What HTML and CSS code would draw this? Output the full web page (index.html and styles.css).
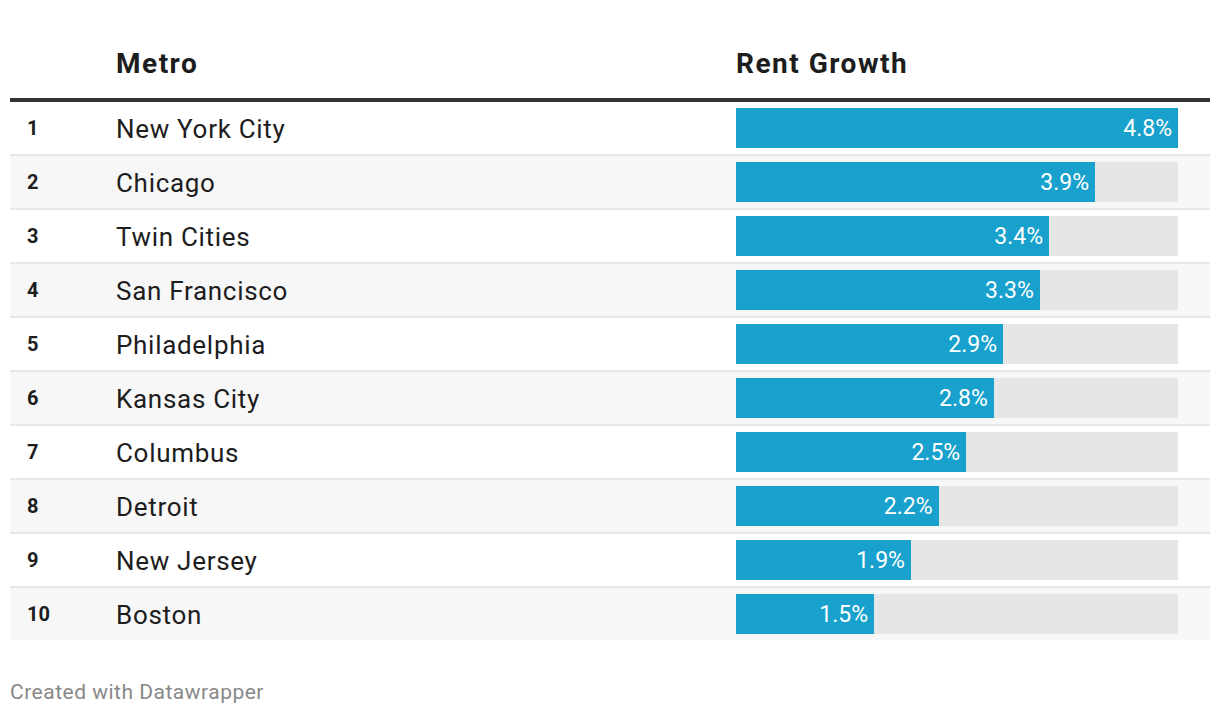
FILE: index.html
```html
<!DOCTYPE html>
<html lang="en">
<head>
<meta charset="utf-8">
<title>Rent Growth</title>
<link rel="stylesheet" href="styles.css">
</head>
<body>
<div class="chart">
  <div class="table">
    <div class="row head">
      <div class="cell rank"></div>
      <div class="cell metro">Metro</div>
      <div class="cell growth">Rent Growth</div>
    </div>
    <div class="row">
      <div class="cell rank">1</div>
      <div class="cell metro">New York City</div>
      <div class="cell growth"><div class="track"><div class="bar" style="width:100%"><span>4.8%</span></div></div></div>
    </div>
    <div class="row">
      <div class="cell rank">2</div>
      <div class="cell metro">Chicago</div>
      <div class="cell growth"><div class="track"><div class="bar" style="width:81.25%"><span>3.9%</span></div></div></div>
    </div>
    <div class="row">
      <div class="cell rank">3</div>
      <div class="cell metro">Twin Cities</div>
      <div class="cell growth"><div class="track"><div class="bar" style="width:70.83%"><span>3.4%</span></div></div></div>
    </div>
    <div class="row">
      <div class="cell rank">4</div>
      <div class="cell metro">San Francisco</div>
      <div class="cell growth"><div class="track"><div class="bar" style="width:68.75%"><span>3.3%</span></div></div></div>
    </div>
    <div class="row">
      <div class="cell rank">5</div>
      <div class="cell metro">Philadelphia</div>
      <div class="cell growth"><div class="track"><div class="bar" style="width:60.42%"><span>2.9%</span></div></div></div>
    </div>
    <div class="row">
      <div class="cell rank">6</div>
      <div class="cell metro">Kansas City</div>
      <div class="cell growth"><div class="track"><div class="bar" style="width:58.33%"><span>2.8%</span></div></div></div>
    </div>
    <div class="row">
      <div class="cell rank">7</div>
      <div class="cell metro">Columbus</div>
      <div class="cell growth"><div class="track"><div class="bar" style="width:52.08%"><span>2.5%</span></div></div></div>
    </div>
    <div class="row">
      <div class="cell rank">8</div>
      <div class="cell metro">Detroit</div>
      <div class="cell growth"><div class="track"><div class="bar" style="width:45.83%"><span>2.2%</span></div></div></div>
    </div>
    <div class="row">
      <div class="cell rank">9</div>
      <div class="cell metro">New Jersey</div>
      <div class="cell growth"><div class="track"><div class="bar" style="width:39.58%"><span>1.9%</span></div></div></div>
    </div>
    <div class="row last">
      <div class="cell rank">10</div>
      <div class="cell metro">Boston</div>
      <div class="cell growth"><div class="track"><div class="bar" style="width:31.25%"><span>1.5%</span></div></div></div>
    </div>
  </div>
  <div class="footer">Created with Datawrapper</div>
</div>
</body>
</html>
```

FILE: styles.css
```css
html, body {
  margin: 0;
  padding: 0;
  background: #ffffff;
}

body {
  font-family: Roboto, "Liberation Sans", sans-serif;
  color: #1d1d1d;
}

.chart {
  padding: 0 10px;
}

.table {
  display: flex;
  flex-direction: column;
}

.row {
  display: grid;
  grid-template-columns: 106px 620px 1fr;
  height: 52px;
  border-bottom: 2px solid #e8e8e8;
}

.row:nth-child(odd) {
  background: #f7f7f7;
}

.row.last {
  border-bottom: none;
}

.row.head {
  height: auto;
  background: #ffffff;
  border-bottom: 4px solid #333333;
  padding: 47px 0 17px;
}

.row.head .cell {
  display: block;
  padding: 0;
  font-size: 28px;
  font-weight: 700;
  line-height: 34px;
  letter-spacing: 1.5px;
  color: #1d1d1d;
}

.cell {
  display: flex;
  align-items: center;
}

.rank {
  padding-left: 17px;
  font-size: 20px;
  font-weight: 700;
}

.metro {
  font-size: 26px;
  letter-spacing: 0.7px;
  padding-top: 1px;
}

.growth {
  padding-right: 32px;
}

.track {
  width: 100%;
  height: 40px;
  background: #e6e6e6;
  display: flex;
}

.bar {
  height: 100%;
  background: #18a1cd;
  display: flex;
  align-items: center;
  justify-content: flex-end;
}

.bar span {
  color: #ffffff;
  font-size: 23px;
  padding-right: 6px;
  white-space: nowrap;
}

.footer {
  margin-top: 40px;
  font-size: 21px;
  letter-spacing: 0.5px;
  color: #888888;
  line-height: 24px;
}
```
